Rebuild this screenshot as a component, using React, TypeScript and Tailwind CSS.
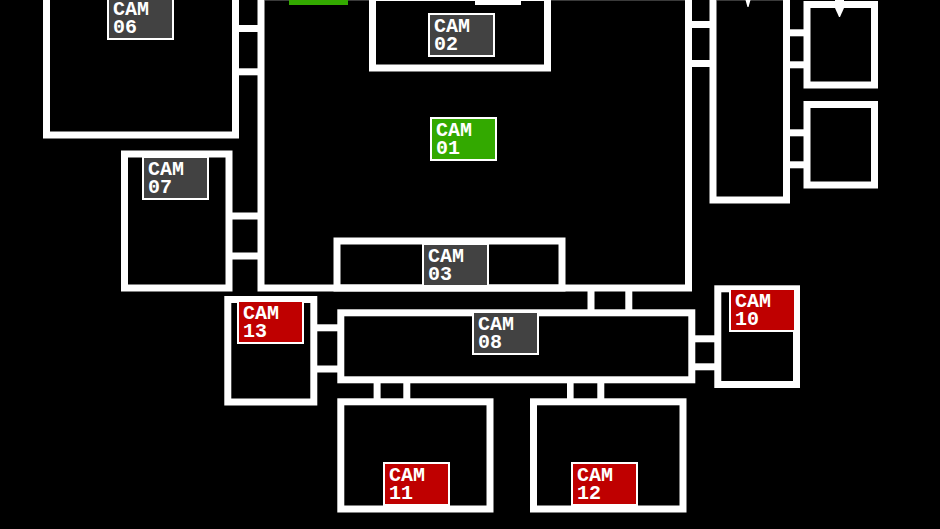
import React, { useState } from "react";

const MAP_WIDTH = 940;
const MAP_HEIGHT = 529;

interface ICamera {
  id: string;
  x: number;
  y: number;
  status: "idle" | "active" | "offline";
}

const cameras: ICamera[] = [
  { id: "06", x: 107, y: -4, status: "idle" },
  { id: "02", x: 428, y: 13, status: "idle" },
  { id: "01", x: 430, y: 117, status: "active" },
  { id: "07", x: 142, y: 156, status: "idle" },
  { id: "03", x: 422, y: 243, status: "idle" },
  { id: "08", x: 472, y: 311, status: "idle" },
  { id: "13", x: 237, y: 300, status: "offline" },
  { id: "10", x: 729, y: 288, status: "offline" },
  { id: "11", x: 383, y: 462, status: "offline" },
  { id: "12", x: 571, y: 462, status: "offline" },
];

// outer edges: left, top, right, bottom
const rooms = [
  [43, -20, 239, 138.5],
  [257.5, -20, 692, 291.5],
  [369, -6, 551, 71.5],
  [709.5, -20, 790, 203.5],
  [803.5, 1, 878, 88.5],
  [803.5, 101, 878, 188.5],
  [121, 150.5, 232.5, 291.5],
  [333.5, 237.5, 565.5, 291.5],
  [337.3, 309.3, 695.3, 383.3],
  [224.3, 296, 317.3, 405.5],
  [714.3, 285.3, 800, 388],
  [337.3, 398.3, 493.5, 512.5],
  [530, 398.3, 686.5, 512.5],
];

// hallway walls: x, y, width, height
const halls = [
  [238, 25, 20, 7],
  [238, 68.3, 20, 7],
  [691, 21, 19, 7],
  [691, 60, 19, 7],
  [789, 29.3, 15, 7],
  [789, 61.3, 15, 7],
  [789, 129.3, 15, 7],
  [789, 161.3, 15, 7],
  [232, 212.5, 27, 7],
  [232, 252.5, 27, 7],
  [587.5, 291, 7, 19],
  [625.3, 291, 7, 19],
  [316, 324.3, 22, 7],
  [316, 365.5, 22, 7],
  [694, 335.3, 21, 7],
  [694, 363.3, 21, 7],
  [373.6, 382, 7, 17],
  [403.3, 382, 7, 17],
  [567, 382, 6.6, 17],
  [597.3, 382, 7, 17],
];

const FloorPlan = () => (
  <svg
    className="absolute inset-0 h-full w-full"
    viewBox={`0 0 ${MAP_WIDTH} ${MAP_HEIGHT}`}
    aria-hidden="true"
  >
    <path d="M265 0H685V1H265ZM717 0H783V1H717Z" fill="#3a3a3a" />
    {rooms.map(([left, top, right, bottom], i) => (
      <rect
        key={i}
        x={left + 3.5}
        y={top + 3.5}
        width={right - left - 7}
        height={bottom - top - 7}
        fill="none"
        stroke="#fff"
        strokeWidth={7}
      />
    ))}
    {halls.map(([x, y, width, height], i) => (
      <rect key={i} x={x} y={y} width={width} height={height} fill="#fff" />
    ))}
    <rect x="289" y="0" width="59" height="5" fill="#33a900" />
    <rect x="475" y="0" width="46" height="5" fill="#fff" />
    <path d="M745.5 0H750.5L748.5 7H747.5Z" fill="#fff" />
    <path d="M835 0H844V8L840 17H839L835 8Z" fill="#fff" />
  </svg>
);

const getStatusColor = (status: ICamera["status"]) => {
  if (status === "active") return "bg-[#33a900]";
  if (status === "offline") return "bg-[#bf0000]";
  return "bg-[#424242]";
};

const CameraButton = ({
  camera,
  onSelect,
}: {
  camera: ICamera;
  onSelect: (id: string) => void;
}) => (
  <button
    type="button"
    onClick={() => onSelect(camera.id)}
    className={`absolute h-11 w-[67px] border-2 border-white pt-0.5 pl-1 text-left font-['Liberation_Mono',monospace] text-xl leading-[18px] font-bold text-white ${getStatusColor(
      camera.status
    )}`}
    style={{
      left: `${(camera.x / MAP_WIDTH) * 100}%`,
      top: `${(camera.y / MAP_HEIGHT) * 100}%`,
    }}
  >
    CAM
    <br />
    {camera.id}
  </button>
);

const App = () => {
  const [selected, setSelected] = useState<string>("01");

  return (
    <main className="min-h-screen overflow-hidden bg-black">
      <div className="relative aspect-[940/529] w-full">
        <FloorPlan />
        {cameras.map((camera) => (
          <CameraButton
            key={camera.id}
            camera={
              camera.status === "offline"
                ? camera
                : { ...camera, status: camera.id === selected ? "active" : "idle" }
            }
            onSelect={(id) => camera.status !== "offline" && setSelected(id)}
          />
        ))}
      </div>
    </main>
  );
};

export default App;
